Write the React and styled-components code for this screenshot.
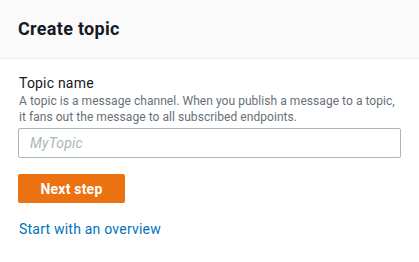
import React from "react";
import styled, { createGlobalStyle } from "styled-components";

const Global = createGlobalStyle`
  html, body { margin: 0; padding: 0; background: #ffffff; }
  body { font-family: Roboto, "Noto Sans", Arial, sans-serif; }
  * { box-sizing: border-box; }
`;

const Panel = styled.div`
  width: 419px;
  height: 262px;
  background: #ffffff;
  display: flex;
  flex-direction: column;
`;

const Header = styled.div`
  height: 59px;
  background: #fafafa;
  border-bottom: 1px solid #eaeded;
  padding: 0 18px;
  display: flex;
  align-items: center;
`;

const Title = styled.h1`
  margin: 0;
  font-size: 18px;
  font-weight: 700;
  color: #16191f;
  line-height: 22px;
  letter-spacing: 0.3px;
`;

const Body = styled.div`
  padding: 14px 18px 0 18px;
  display: flex;
  flex-direction: column;
`;

const Label = styled.label`
  font-size: 14px;
  line-height: 20px;
  color: #16191f;
  padding-left: 1px;
  letter-spacing: 0.2px;
`;

const Description = styled.div`
  font-size: 12px;
  line-height: 16px;
  color: #687078;
  padding-left: 1px;
  white-space: nowrap;
  letter-spacing: 0.05px;
`;

const Input = styled.input`
  margin-top: 3px;
  width: 383px;
  height: 30px;
  border: 1px solid #aab7b8;
  border-radius: 2px;
  padding: 0 11px;
  font-family: inherit;
  font-size: 14px;
  color: #16191f;
  background: #fff;
  outline: none;
  &::placeholder {
    color: #aab7b8;
    font-style: italic;
    letter-spacing: 0.2px;
  }
`;

const Button = styled.button`
  margin-top: 16px;
  align-self: flex-start;
  width: 107px;
  height: 29px;
  background: #ec7211;
  border: none;
  border-radius: 2px;
  color: #ffffff;
  font-family: inherit;
  font-size: 14px;
  font-weight: 700;
  letter-spacing: 0.2px;
  padding: 0;
  cursor: pointer;
`;

const Link = styled.a`
  margin-top: 16px;
  font-size: 14px;
  line-height: 20px;
  color: #0073bb;
  text-decoration: none;
  padding-left: 1px;
  letter-spacing: 0.22px;
  align-self: flex-start;
`;

export default function App() {
  return (
    <>
      <Global />
      <Panel>
        <Header>
          <Title>Create topic</Title>
        </Header>
        <Body>
          <Label>Topic name</Label>
          <Description>
            A topic is a message channel. When you publish a message to a topic,
            <br />
            it fans out the message to all subscribed endpoints.
          </Description>
          <Input placeholder="MyTopic" />
          <Button>Next step</Button>
          <Link href="#">Start with an overview</Link>
        </Body>
      </Panel>
    </>
  );
}
